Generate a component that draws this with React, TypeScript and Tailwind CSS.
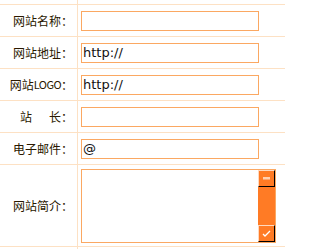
import type { ReactNode } from "react";

const LINE = "border-[#fde1c4]";

function Row({ label, children, tall = false }: { label: ReactNode; children: ReactNode; tall?: boolean }) {
  return (
    <div className={`flex border-t ${LINE} ${tall ? "h-[83px] border-b" : "h-[32px]"}`}>
      <div
        className={`flex w-[78px] shrink-0 items-center justify-end border-r ${LINE} pr-[4px] text-[12px] leading-none text-[#2a1800]`}
      >
        {label}
      </div>
      <div className="flex flex-1 items-center pl-[3px]">{children}</div>
    </div>
  );
}

function TextInput({ value = "" }: { value?: string }) {
  return (
    <input
      defaultValue={value}
      className="h-[20px] w-[178px] border border-[#fba862] bg-white px-[1px] text-[13px] text-[#111] outline-none"
      style={{ fontFamily: '"DejaVu Sans", sans-serif' }}
    />
  );
}

function ScrollButton({ down = false }: { down?: boolean }) {
  return (
    <div className="flex h-[17px] w-[17px] items-center justify-center border-t border-l border-r border-b border-t-[#ffd9bf] border-l-[#ffd9bf] border-r-black border-b-black bg-[#ff7b25]">
      {down ? (
        <svg width="9" height="7" viewBox="0 0 9 7">
          <path d="M1 4 L3 6 L8 1" stroke="#ffffff" strokeWidth="1.3" fill="none" />
        </svg>
      ) : (
        <svg width="9" height="4" viewBox="0 0 9 4">
          <path d="M1 2 H8" stroke="#ffffff" strokeWidth="1.3" fill="none" />
          <path d="M1 3.5 H8" stroke="#ffb080" strokeWidth="0.8" fill="none" />
        </svg>
      )}
    </div>
  );
}

export default function App() {
  return (
    <div className="w-[285px] bg-white" style={{ fontFamily: '"Noto Sans CJK SC", "Liberation Sans", sans-serif' }}>
      {/* cut-off row above */}
      <div className="flex h-[4px]">
        <div className={`w-[78px] border-r ${LINE}`} />
      </div>

      <Row label="网站名称：">
        <TextInput />
      </Row>
      <Row label="网站地址：">
        <TextInput value="http://" />
      </Row>
      <Row
        label={
          <>
            网站<span className="text-[11px] tracking-[-0.6px]">LOGO</span>：
          </>
        }
      >
        <TextInput value="http://" />
      </Row>
      <Row
        label={
          <>
            <span>站</span>
            <span className="ml-[17px]">长：</span>
          </>
        }
      >
        <TextInput />
      </Row>
      <Row label="电子邮件：">
        <TextInput value="@" />
      </Row>
      <Row label="网站简介：" tall>
        <div className="flex h-[74px] w-[195px] border border-[#fba862] bg-white">
          <textarea className="flex-1 resize-none overflow-hidden bg-white text-[13px] outline-none" />
          <div className="flex w-[17px] flex-col bg-[#ff7b25]">
            <ScrollButton />
            <div className="flex-1" />
            <ScrollButton down />
          </div>
        </div>
      </Row>

      <div className="flex h-[2px]">
        <div className={`w-[78px] border-r ${LINE}`} />
      </div>
    </div>
  );
}
